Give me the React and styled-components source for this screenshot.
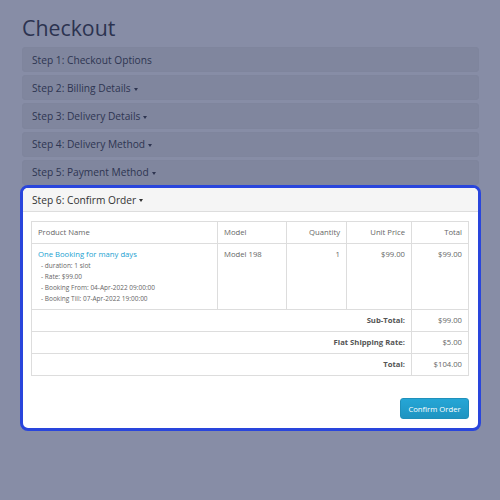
import styled, { createGlobalStyle } from 'styled-components'

const GlobalStyle = createGlobalStyle`
  body {
    margin: 0;
    background: #878da6;
    font-family: 'Open Sans', 'Liberation Sans', sans-serif;
  }
`

const Page = styled.div`
  padding: 13px 21px 20px 22px;
`

const Title = styled.h1`
  margin: 0 0 4px;
  font-size: 21.3px;
  line-height: 30px;
  font-weight: 400;
  color: #2c3350;
`

const Panel = styled.div`
  margin-bottom: 3px;
  border: 1px solid #7f859d;
  border-radius: 3px;
  background: #80869e;
`

const ActivePanel = styled.div`
  margin: -3px -2px 0;
  border: 3px solid #2945dc;
  border-radius: 8px;
  background: #fff;
  overflow: hidden;
`

const Heading = styled.div`
  padding: 5.6px 9px;
  font-size: 10.2px;
  line-height: 12px;
  color: ${p => (p.active ? '#333' : '#2e3551')};
  background: ${p => (p.active ? '#f5f5f5' : 'transparent')};
  border-bottom: ${p => (p.active ? '1px solid #ddd' : 'none')};
`

const Caret = styled.span`
  display: inline-block;
  width: 0;
  height: 0;
  margin-left: 3px;
  vertical-align: middle;
  border-top: 3px solid currentColor;
  border-left: 2.5px solid transparent;
  border-right: 2.5px solid transparent;
`

const Body = styled.div`
  padding: 9px 9px 9px 8px;
`

const Table = styled.table`
  width: 100%;
  table-layout: fixed;
  border-collapse: collapse;
  font-size: 7.7px;
  color: #666;
  td {
    border: 1px solid #ddd;
    padding: 5px 6px;
    line-height: 11px;
    vertical-align: top;
  }
`

const Cell = styled.td`
  text-align: ${p => p.align || 'left'};
  font-weight: ${p => (p.bold ? 700 : 400)};
  color: ${p => (p.bold ? '#555' : '#666')};
`

const ItemLink = styled.a`
  color: #23a1d1;
  text-decoration: none;
`

const Option = styled.small`
  display: block;
  font-size: 6.5px;
  line-height: 11px;
  padding-left: 3px;
`

const Actions = styled.div`
  display: flex;
  justify-content: flex-end;
  margin-top: 22px;
`

const Button = styled.button`
  width: 69px;
  height: 21px;
  padding: 0;
  border: 1px solid #1f90bb;
  border-radius: 3px;
  background: linear-gradient(#25a6d6, #1f94c1);
  color: #fff;
  font-family: inherit;
  font-size: 7.7px;
`

const steps = [
  { title: 'Step 1: Checkout Options', caret: false },
  { title: 'Step 2: Billing Details', caret: true },
  { title: 'Step 3: Delivery Details', caret: true },
  { title: 'Step 4: Delivery Method', caret: true },
  { title: 'Step 5: Payment Method', caret: true },
]

const options = [
  'duration: 1 slot',
  'Rate: $99.00',
  'Booking From: 04-Apr-2022 09:00:00',
  'Booking Till: 07-Apr-2022 19:00:00',
]

const totals = [
  { label: 'Sub-Total:', value: '$99.00' },
  { label: 'Flat Shipping Rate:', value: '$5.00' },
  { label: 'Total:', value: '$104.00' },
]

const App = () => (
  <Page>
    <GlobalStyle />
    <Title>Checkout</Title>
    {steps.map(step => (
      <Panel key={step.title}>
        <Heading>
          {step.title}
          {step.caret && <Caret />}
        </Heading>
      </Panel>
    ))}
    <ActivePanel>
      <Heading active>
        Step 6: Confirm Order
        <Caret />
      </Heading>
      <Body>
        <Table>
          <colgroup>
            <col style={{ width: 186 }} />
            <col style={{ width: 69 }} />
            <col style={{ width: 60 }} />
            <col style={{ width: 65 }} />
            <col />
          </colgroup>
          <thead>
            <tr>
              <Cell>Product Name</Cell>
              <Cell>Model</Cell>
              <Cell align='right'>Quantity</Cell>
              <Cell align='right'>Unit Price</Cell>
              <Cell align='right'>Total</Cell>
            </tr>
          </thead>
          <tbody>
            <tr>
              <Cell>
                <ItemLink href='#'>One Booking for many days</ItemLink>
                {options.map(opt => (
                  <Option key={opt}>- {opt}</Option>
                ))}
              </Cell>
              <Cell>Model 198</Cell>
              <Cell align='right'>1</Cell>
              <Cell align='right'>$99.00</Cell>
              <Cell align='right'>$99.00</Cell>
            </tr>
          </tbody>
          <tfoot>
            {totals.map(row => (
              <tr key={row.label}>
                <Cell colSpan={4} align='right' bold>
                  {row.label}
                </Cell>
                <Cell align='right'>{row.value}</Cell>
              </tr>
            ))}
          </tfoot>
        </Table>
        <Actions>
          <Button>Confirm Order</Button>
        </Actions>
      </Body>
    </ActivePanel>
  </Page>
)

export default App
